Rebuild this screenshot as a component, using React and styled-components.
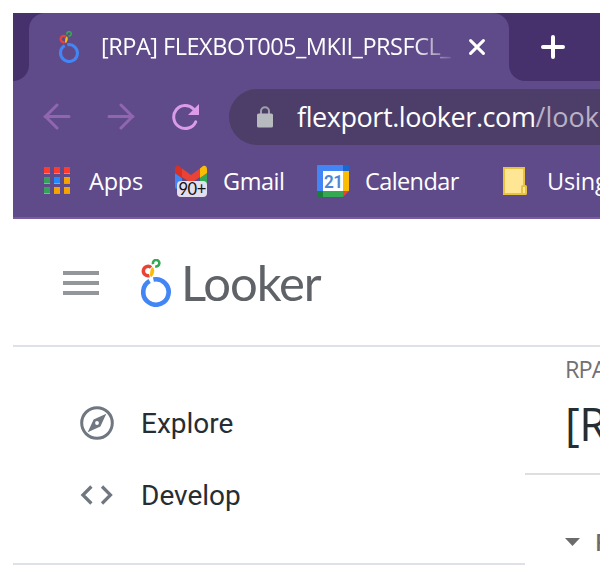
import React from "react";
import styled, { createGlobalStyle } from "styled-components";

const Global = createGlobalStyle`
  * { box-sizing: border-box; }
  body { margin: 0; background: #fff; overflow: hidden; }
  svg { display: block; flex: none; }
`;

const Page = styled.div`
  width: 600px;
  height: 580px;
  padding: 13px 0 0 13px;
  overflow: hidden;
  background: #fff;
  font-family: "Open Sans", sans-serif;
`;

const Chrome = styled.header`
  height: 206px;
  background: #604b8a;
  border-bottom: 2px solid #7c5a9e;
  color: #fff;
`;

const TabStrip = styled.div`
  display: flex;
  height: 68px;
  background: linear-gradient(#46316c 50%, #604b8a 50%);
`;

const StripEdge = styled.div`
  width: 16px;
  background: #46316c;
  border-bottom-right-radius: 16px;
`;

const Tab = styled.div`
  display: flex;
  align-items: center;
  width: 480px;
  padding-left: 30px;
  background: #604b8a;
  border-radius: 16px 16px 0 0;
`;

const TabTitle = styled.div`
  width: 352px;
  margin: 0 16px 2px 22px;
  overflow: hidden;
  white-space: nowrap;
  font-size: 23.5px;
  line-height: 34px;
  letter-spacing: ${(p) => p.$spacing};
  mask-image: linear-gradient(to right, #000 312px, transparent 356px);
`;

const StripRest = styled.div`
  flex: 1;
  display: flex;
  align-items: center;
  padding-left: 31px;
  background: #46316c;
  border-bottom-left-radius: 16px;
`;

const Toolbar = styled.div`
  display: flex;
  align-items: center;
  height: 72px;
  padding-left: 30px;
`;

const NavIcons = styled.div`
  display: flex;
  gap: 36px;
  width: 186px;
`;

const Omnibox = styled.div`
  flex: 1;
  display: flex;
  align-items: center;
  height: 56px;
  padding-left: 28px;
  overflow: hidden;
  border-radius: 28px 0 0 28px;
  background: #4c3e68;
`;

const Url = styled.div`
  margin-left: 24px;
  white-space: nowrap;
  font-size: 27px;
  line-height: 36px;
  letter-spacing: ${(p) => p.$spacing};
`;

const Path = styled.span`
  letter-spacing: 0;
  color: #b9b2c6;
`;

const Bookmarks = styled.nav`
  display: flex;
  height: 64px;
  padding-left: 30px;
  overflow: hidden;
`;

const Bookmark = styled.div`
  flex: none;
  display: flex;
  align-items: center;
  gap: ${(p) => p.$gap}px;
  width: ${(p) => p.$width}px;
  height: 56px;
  font-size: 23.5px;
  letter-spacing: ${(p) => p.$spacing};
`;

const AppHeader = styled.div`
  display: flex;
  align-items: center;
  height: 128px;
  padding: 2px 0 0 50px;
  border-bottom: 2px solid #dee1e5;
`;

const Brand = styled.div`
  display: flex;
  margin-left: 42px;
`;

const Wordmark = styled.div`
  margin: 0 0 0 10px;
  font: 400 49px/46px Lato, sans-serif;
  letter-spacing: ${(p) => p.$spacing};
  color: #5f6368;
`;

const Body = styled.div`
  display: grid;
  grid-template-columns: 512px 1fr;
`;

const Sidebar = styled.aside`
  height: 218px;
  padding: 40px 0 0 66px;
  border-bottom: 2px solid #dee1e5;
  font-family: Roboto, sans-serif;
`;

const NavItem = styled.div`
  display: flex;
  align-items: center;
  gap: 26px;
  height: 72px;
  font-size: 28px;
  color: #262d33;
`;

const Content = styled.main`
  overflow: hidden;
  white-space: nowrap;
`;

const TitleBlock = styled.div`
  height: 128px;
  padding: 7px 0 0 40px;
  border-bottom: 2px solid #dedede;
`;

const Crumb = styled.div`
  font-size: 23.5px;
  line-height: 30px;
  letter-spacing: -1px;
  color: #74706f;
`;

const Heading = styled.h1`
  margin: 10px 0 0;
  font-weight: 400;
  font-size: 45px;
  line-height: 60px;
  letter-spacing: -0.5px;
  color: #262d33;
`;

const FilterRow = styled.div`
  display: flex;
  align-items: center;
  gap: 15px;
  padding: 51px 0 0 40px;
  font-size: 23px;
  font-weight: 600;
  line-height: 32px;
  color: #6b6b6b;
`;

const LookerMark = ({ width, height }) => (
  <svg width={width} height={height} viewBox="0 0 30 48">
    <path d="M12.4 20.56A12.7 12.7 0 1 1 8.6 22" fill="none" stroke="#4285f4" strokeWidth="4.6" />
    <path d="M8.4 16.6A4.7 4.7 0 1 1 10.1 8.5" fill="none" stroke="#ea4335" strokeWidth="3.5" />
    <path d="M11.8 7.9C13.9 10.1 13.9 14 10.5 18.2L8.9 16.6C9.4 13.4 9 11.5 10.4 9.3Z" fill="#fbbc04" />
    <path d="M12.1 5.1A3.2 3.2 0 1 1 14.2 7.2" fill="none" stroke="#34a853" strokeWidth="2.6" />
  </svg>
);

const Back = () => (
  <svg width="28" height="28" viewBox="0 0 28 28" fill="none" stroke="#9166b0" strokeWidth="3" strokeLinecap="round">
    <path d="M26 13.5H2M14 2L2.5 13.5L14 25" strokeLinejoin="round" />
  </svg>
);

const Forward = () => (
  <svg width="28" height="28" viewBox="0 0 28 28" fill="none" stroke="#9166b0" strokeWidth="3" strokeLinecap="round">
    <path d="M2 13.5H26M14 2L25.5 13.5L14 25" strokeLinejoin="round" />
  </svg>
);

const Reload = () => (
  <svg width="28" height="28" viewBox="0 0 28 28">
    <path d="M24.7 18.8A11.5 11.5 0 1 1 22.5 6" fill="none" stroke="#dc9be8" strokeWidth="3" strokeLinecap="round" />
    <path d="M28 1V12H17Z" fill="#dc9be8" />
  </svg>
);

const Lock = () => (
  <svg width="16" height="22" viewBox="0 0 16 22">
    <path d="M4 8V5.2a4 4 0 0 1 8 0V8" fill="none" stroke="#9fa0a9" strokeWidth="2" />
    <rect y="7.5" width="16" height="14" rx="1.6" fill="#b7bbc0" />
  </svg>
);

const colors = ["#ff3b30", "#ff3b30", "#ff3b30", "#35a15a", "#208bff", "#f4a300", "#35a15a", "#f4a300", "#f4a300"];
const AppsIcon = () => (
  <svg width="28" height="28" viewBox="0 0 28 28">
    {colors.map((c, i) => {
      const x = 1 + (i % 3) * 10;
      const y = Math.floor(i / 3) * 10;
      return (
        <g key={i}>
          <rect x={x} y={y + 6} width="6" height="1" fill="#a99bc0" />
          <rect x={x} y={y} width="6" height="6" fill={c} />
        </g>
      );
    })}
  </svg>
);

const GmailIcon = () => (
  <svg width="32" height="32" viewBox="0 0 32 32">
    <path d="M0 8L7 13V24H2Q0 24 0 22Z" fill="#4285f4" />
    <path d="M32 8L25 13V24H30Q32 24 32 22Z" fill="#34a853" />
    <path d="M25 3.5L28 1Q32 0 32 5V8L25 13Z" fill="#fbbc04" />
    <path d="M7 3.5L16 10L25 3.5V12L16 18L7 12Z" fill="#ea4335" />
    <path d="M7 3.5L4 1Q0 0 0 5V8L7 13Z" fill="#d93025" />
    <rect x="2" y="16" width="30" height="16" rx="4" fill="#e3dff0" />
    <text x="3.4" y="30" fontFamily="Lato, sans-serif" fontSize="16.5" textLength="27.4" lengthAdjust="spacingAndGlyphs" fill="#111">90+</text>
  </svg>
);

const CalendarIcon = () => (
  <svg width="32" height="32" viewBox="0 0 32 32">
    <path d="M0 1Q0 0 1 0H26V6H6V26H0Z" fill="#4285f4" />
    <path d="M26 0H31Q32 0 32 1V6H26Z" fill="#1967d2" />
    <path d="M26 6H32V26H26Z" fill="#fbbc04" />
    <path d="M6 26H26V32H6Z" fill="#34a853" />
    <path d="M0 26H6V32H1Q0 32 0 31Z" fill="#188038" />
    <path d="M26 26H32L26 32Z" fill="#ea4335" />
    <rect x="6" y="6" width="20" height="20" fill="#fff" />
    <text x="7" y="22.6" fontFamily="Roboto, sans-serif" fontSize="18.5" fontWeight="600" textLength="18.5" lengthAdjust="spacingAndGlyphs" fill="#4c86d9">21</text>
  </svg>
);

const NoteIcon = () => (
  <svg width="24" height="28" viewBox="0 0 24 28">
    <rect x="1" y="1" width="20" height="26" fill="#ffe694" stroke="#e8c341" strokeWidth="2" />
    <rect x="19" y="19" width="4" height="8" rx=".6" fill="#ffe694" stroke="#e8c341" strokeWidth="2" />
  </svg>
);

const Menu = () => (
  <svg width="36" height="24" viewBox="0 0 36 24" fill="#939799">
    <path d="M0 0H36V4H0ZM0 10H36V14H0ZM0 20H36V24H0Z" />
  </svg>
);

const Compass = () => (
  <svg width="36" height="36" viewBox="0 0 36 36">
    <circle cx="18" cy="18" r="15.3" fill="none" stroke="#707781" strokeWidth="3" />
    <path fillRule="evenodd" d="M27.3 8.7L21.4 21.4L8.7 27.3L14.6 14.6ZM18 16.1a1.9 1.9 0 1 0 0 3.8a1.9 1.9 0 1 0 0-3.8Z" fill="#707781" />
  </svg>
);

const Code = () => (
  <svg width="36" height="36" viewBox="0 0 36 36" fill="none" stroke="#707781" strokeWidth="3.2">
    <path d="M12.4 9.5L3.9 18L12.4 26.5M23 9.5L31.5 18L23 26.5" />
  </svg>
);

const Close = () => (
  <svg width="16" height="16" viewBox="0 0 16 16" stroke="#fff" strokeWidth="3" strokeLinecap="round">
    <path d="M1.6 1.6L14.4 14.4M14.4 1.6L1.6 14.4" />
  </svg>
);

const Plus = () => (
  <svg width="26" height="26" viewBox="0 0 26 26" stroke="#fff" strokeWidth="4" strokeLinecap="round">
    <path d="M3 13H23M13 3V23" />
  </svg>
);

export default function App() {
  return (
    <Page>
      <Global />
      <Chrome>
        <TabStrip>
          <StripEdge />
          <Tab>
            <LookerMark width={20} height={32} />
            <TabTitle $spacing="-0.48px">[RPA] FLEXBOT005_MKII_PRSFCL_</TabTitle>
            <Close />
          </Tab>
          <StripRest><Plus /></StripRest>
        </TabStrip>
        <Toolbar>
          <NavIcons><Back /><Forward /><Reload /></NavIcons>
          <Omnibox>
            <Lock />
            <Url $spacing="-0.43px">flexport.looker.com<Path>/look</Path></Url>
          </Omnibox>
        </Toolbar>
        <Bookmarks>
          <Bookmark $gap={18} $width={132} $spacing="-0.2px"><AppsIcon />Apps</Bookmark>
          <Bookmark $gap={16} $width={142} $spacing="-0.45px"><GmailIcon />Gmail</Bookmark>
          <Bookmark $gap={16} $width={186} $spacing="-0.6px"><CalendarIcon />Calendar</Bookmark>
          <Bookmark $gap={20} $width={160} $spacing="-0.2px"><NoteIcon />Using</Bookmark>
        </Bookmarks>
      </Chrome>
      <AppHeader>
        <Menu />
        <Brand>
          <LookerMark width={30} height={48} />
          <Wordmark $spacing="-1.1px">Looker</Wordmark>
        </Brand>
      </AppHeader>
      <Body>
        <Sidebar>
          <NavItem><Compass />Explore</NavItem>
          <NavItem><Code />Develop</NavItem>
        </Sidebar>
        <Content>
          <TitleBlock>
            <Crumb>RPA</Crumb>
            <Heading>[RPA]</Heading>
          </TitleBlock>
          <FilterRow>
            <svg width="15" height="8" viewBox="0 0 15 8"><path d="M0 0H15L7.5 8Z" fill="#6b6b6b" /></svg>
            Filters
          </FilterRow>
        </Content>
      </Body>
    </Page>
  );
}
